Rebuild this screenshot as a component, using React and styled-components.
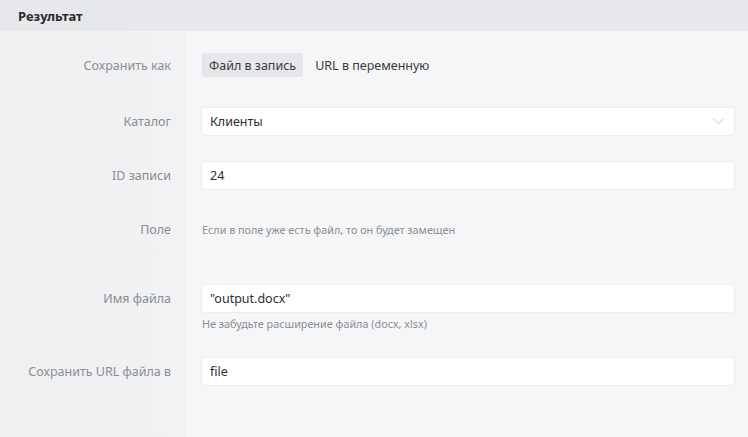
import React from 'react';
import styled, { createGlobalStyle } from 'styled-components';

const GlobalStyle = createGlobalStyle`
  html, body {
    margin: 0;
    padding: 0;
    background: #f5f6f8;
  }

  body {
    font-family: 'Noto Sans', 'Liberation Sans', Arial, sans-serif;
    -webkit-font-smoothing: antialiased;
  }
`;

const Chevron = () => (
  <svg width="11" height="7" viewBox="0 0 11 7" fill="none">
    <path d="M0.5 0.8L5.5 5.8L10.5 0.8" stroke="#c4c6cb" strokeWidth="1" />
  </svg>
);

const Field = ({ label, top, children }) => (
  <Row top={top}>
    <Label>{label}</Label>
    <Control>{children}</Control>
  </Row>
);

const App = () => (
  <Panel>
    <GlobalStyle />
    <Header>Результат</Header>

    <Body>
      <Field label="Сохранить как" top={22}>
        <Segmented>
          <Segment active>Файл в запись</Segment>
          <Segment>URL в переменную</Segment>
        </Segmented>
      </Field>

      <Field label="Каталог" top={31}>
        <Input>
          <span>Клиенты</span>
          <Chevron />
        </Input>
      </Field>

      <Field label="ID записи" top={27}>
        <Input>24</Input>
      </Field>

      <Field label="Поле" top={27}>
        <Hint>Если в поле уже есть файл, то он будет замещен</Hint>
      </Field>

      <Field label="Имя файла" top={42}>
        <Input>"output.docx"</Input>
      </Field>
      <Note>Не забудьте расширение файла (docx, xlsx)</Note>

      <Field label="Сохранить URL файла в" top={27}>
        <Input>file</Input>
      </Field>
    </Body>
  </Panel>
);

export default App;

const Panel = styled.div`
  width: 748px;
  height: 437px;
  display: flex;
  flex-direction: column;
  overflow: hidden;
  background: #f5f6f8;
`;

const Header = styled.div`
  height: 31px;
  flex: 0 0 31px;
  display: flex;
  align-items: center;
  padding-left: 18px;
  background: #e7e8eb;
  color: #2b2b2b;
  font-size: 13px;
  font-weight: 700;
`;

const Body = styled.div`
  flex: 1;
  display: flex;
  flex-direction: column;
  background: linear-gradient(to right, #eff0f2 0, #f1f2f4 186px, #f5f6f8 186px);
`;

const Row = styled.div`
  display: grid;
  grid-template-columns: 186px 1fr;
  align-items: center;
  margin-top: ${(p) => p.top}px;
  min-height: 24px;
`;

const Label = styled.div`
  padding-right: 15px;
  text-align: right;
  color: #8b8d91;
  font-size: 12.5px;
`;

const Control = styled.div`
  padding: 0 14px 0 16px;
`;

const Segmented = styled.div`
  display: flex;
  gap: 5px;
`;

const Segment = styled.div`
  height: 24px;
  display: flex;
  align-items: center;
  padding: 0 7px;
  border-radius: 3px;
  background: ${(p) => (p.active ? '#e6e7ea' : 'transparent')};
  color: #3a3a3a;
  font-size: 12.5px;
`;

const Input = styled.div`
  height: 27px;
  box-sizing: border-box;
  display: flex;
  align-items: center;
  justify-content: space-between;
  padding: 0 10px 0 8px;
  background: #fff;
  border-radius: 3px;
  box-shadow: 0 0 0 1px #eceef1, 0 1px 1px rgba(0, 0, 0, 0.03);
  color: #2f2f2f;
  font-size: 12.5px;
`;

const Hint = styled.div`
  height: 27px;
  display: flex;
  align-items: center;
  color: #8b8d91;
  font-size: 10.8px;
`;

const Note = styled.div`
  margin: 5px 0 0 202px;
  color: #8b8d91;
  font-size: 10.8px;
  line-height: 14px;
`;
